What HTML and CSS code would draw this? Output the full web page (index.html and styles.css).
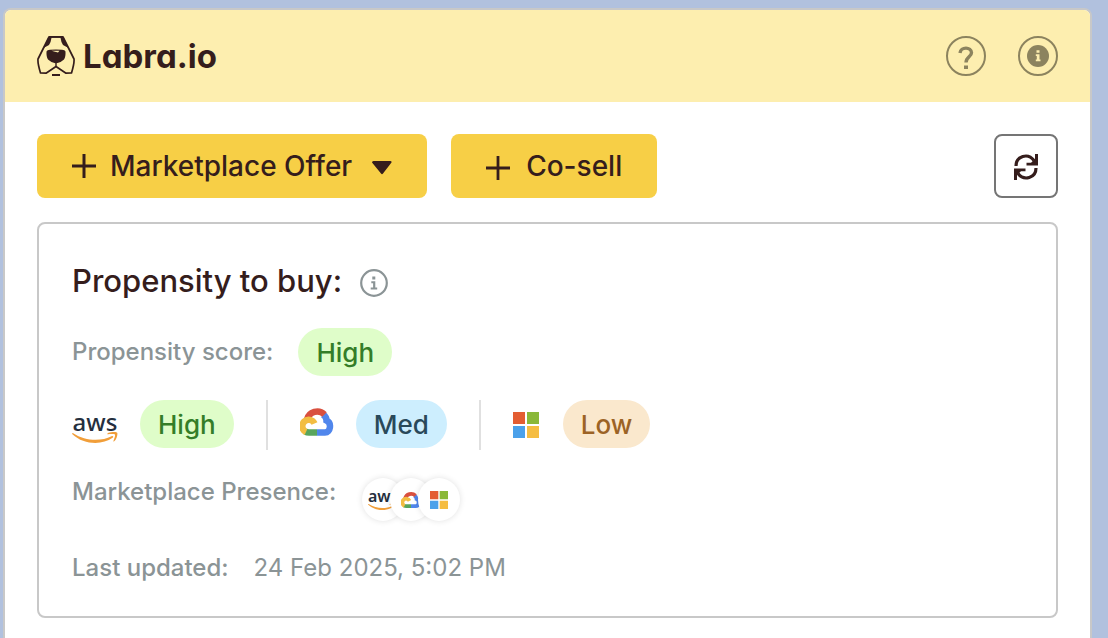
FILE: index.html
```
<!DOCTYPE html>
<html lang="en">
<head>
  <meta charset="UTF-8" />
  <meta name="viewport" content="width=device-width, initial-scale=1.0"/>
  <title>Labra.io</title>
  <link rel="stylesheet" href="styles.css">
</head>
<body>
  <!-- shared logo shapes -->
  <svg class="symbols" aria-hidden="true">
    <symbol id="google-cloud" viewBox="0 0 34 28">
      <path fill="none" stroke="#5086ec" stroke-width="6.500" d="M23 6.500Q26.500 9 26.500 12.500C32 15 30.500 24.500 25 24.500H17"/>
      <path fill="none" stroke="#d9503f" stroke-width="6.500" d="M7 11.500A10.500 10.500 0 0 1 24.500 6.500"/>
      <path fill="none" stroke="#58a55c" stroke-width="6.500" d="M17 24.500H9Q7 24.500 5 23.500"/>
      <path fill="none" stroke="#f2bd42" stroke-width="6.500" d="M6 24A6.400 6.400 0 1 1 14.500 15.500"/>
    </symbol>
    <symbol id="microsoft" viewBox="0 0 26 26">
      <path fill="#e35d32" d="M0 0h12v12H0z"/>
      <path fill="#8ab839" d="M14 0h12v12H14z"/>
      <path fill="#4ba1ea" d="M0 14h12v12H0z"/>
      <path fill="#f5bd42" d="M14 14h12v12H14z"/>
    </symbol>
    <symbol id="aws-smile" viewBox="0 0 46 12">
      <path fill="#f19e39" d="M1.200 1.200C13 9 29 9.600 39.500 4.200C41 3.600 42 4.800 40.600 5.800C30 13.500 11.500 12.800.400 2.200C-.200 1.400.400.700 1.200 1.200z"/>
      <path fill="#f19e39" d="M35.500 1.400C38 -.300 44 -.500 45.200.800C46 2.200 44.500 7.500 42.200 9.300C41.500 9.800 41.200 9.400 41.500 8.700C42.400 6.500 43.500 3.500 42.900 2.600C42.200 1.800 38.500 2 36.100 2.300C35.200 2.400 34.900 1.900 35.500 1.400z"/>
    </symbol>
  </svg>

  <div class="panel">
    <header>
      <a class="brand" href="#">
        <svg class="brand-mark" viewBox="0 0 38 40" aria-hidden="true">
          <path fill="none" stroke="#351d1c" stroke-width="1.700" stroke-linejoin="round" d="M12 1L8 9L1 23Q.500 27 3.500 37L9 37.200L19 30.500L29 37.200L34.500 37Q37.500 27 37 23L30 9L26 1z"/>
          <path fill="#351d1c" d="M12 0H26L31.500 12L26 9Q24 6 23.500 1.800H14.500Q14 6 12 9L6.500 12z"/>
          <path fill="#351d1c" d="M9.500 15.500Q10 14 13 13.800Q19 13 25 13.800Q28 14 28.500 15.500Q28.800 21 27 23.500Q24 26.500 19.700 27.200V31H18.300V27.200Q14 26.500 11 23.500Q9.200 21 9.500 15.500z"/>
          <path fill="#fdeeaf" d="M14.500 14.800H22.500L21 16.400L18 15.700z"/>
          <path fill="#351d1c" d="M15 38H23V40H15z"/>
        </svg>
        <span>Labra.io</span>
      </a>
      <div class="header-actions">
        <button class="round-button" aria-label="Help">
          <svg class="question" width="16" height="24" viewBox="0 0 16 24" aria-hidden="true">
            <path fill="none" stroke="#8c835e" stroke-width="3.400" d="M2 7C2.500 .500 13.500 .500 13.500 6.800C13.500 10.800 8 11 8 16.500"/>
            <path fill="#8c835e" d="M6 19.500h4v3.500H6z"/>
          </svg>
        </button>
        <button class="round-button" aria-label="Information">
          <svg width="22" height="22" viewBox="0 0 22 22" aria-hidden="true">
            <circle cx="11" cy="11" r="11" fill="#8c835e"/>
            <path fill="#fdeeaf" d="M9.500 5.300h3v2.400h-3zM8.800 9.300h3.700v5.200h1v1.700H8.800v-1.700h1V11h-1z"/>
          </svg>
        </button>
      </div>
    </header>

    <main>
      <div class="toolbar">
        <button class="primary-button offer-button">
          <svg width="24" height="24" viewBox="0 0 24 24" aria-hidden="true"><path stroke="#351d1c" stroke-width="3" d="M0 12H24M12 0V24"/></svg>
          <span>Marketplace Offer</span>
          <svg class="caret" width="20" height="14" viewBox="0 0 20 14" aria-hidden="true"><path fill="#351d1c" d="M0 1.500Q0 0 1.500 0H18.500Q20 0 19.500 1.500L11 12.500Q10 14 9 12.500z"/></svg>
        </button>
        <button class="primary-button cosell-button">
          <svg class="plus-thin" width="24" height="24" viewBox="0 0 24 24" aria-hidden="true"><path stroke="#351d1c" stroke-width="2.800" d="M0 12H24M12 0V24"/></svg>
          <span>Co-sell</span>
        </button>
        <button class="refresh-button" aria-label="Refresh">
          <svg class="refresh-icon" width="24" height="26" viewBox="0 0 24 26" aria-hidden="true">
            <path fill="none" stroke="#351d1c" stroke-width="3.200" d="M2 12C2 2 14 -1.500 20 6.500M22 14C22 24 10 27.500 4 19.500"/>
            <path fill="#351d1c" d="M24 0V11.500H12.500V8.800H17L21 5V0zM0 26V14.500H11.500V17.200H7L3 21V26z"/>
          </svg>
        </button>
      </div>

      <section class="card">
        <h1 class="card-title">
          Propensity to buy:
          <svg width="28" height="28" viewBox="0 0 28 28" aria-hidden="true">
            <circle cx="14" cy="14" r="12.800" fill="none" stroke="#8b9496" stroke-width="2.200"/>
            <path fill="#8b9496" d="M12.300 7.500h3v3h-3zM11.300 12.200h4v6.300h1.900v2.100h-6.500v-2.100h2.400v-4.200h-1.800z"/>
          </svg>
        </h1>

        <div class="score">
          <span class="label">Propensity score:</span>
          <span class="chip high">High</span>
        </div>

        <div class="clouds">
          <div class="cloud">
            <span class="aws" role="img" aria-label="AWS">aws<svg><use href="#aws-smile"/></svg></span>
            <span class="chip high">High</span>
          </div>
          <div class="cloud google">
            <svg class="google-logo" role="img" aria-label="Google Cloud"><use href="#google-cloud"/></svg>
            <span class="chip med">Med</span>
          </div>
          <div class="cloud microsoft">
            <svg class="microsoft-logo" role="img" aria-label="Microsoft"><use href="#microsoft"/></svg>
            <span class="chip low">Low</span>
          </div>
        </div>

        <div class="presence">
          <span class="label">Marketplace Presence:</span>
          <div class="badges">
            <span class="badge"><span class="aws small">aws<svg><use href="#aws-smile"/></svg></span></span>
            <span class="badge"><svg class="google-logo"><use href="#google-cloud"/></svg></span>
            <span class="badge"><svg class="microsoft-logo"><use href="#microsoft"/></svg></span>
          </div>
        </div>

        <div class="updated">
          <span class="label">Last updated:</span>
          <time datetime="2025-02-24T17:02">24 Feb 2025, 5:02 PM</time>
        </div>
      </section>
    </main>
  </div>
</body>
</html>
```

FILE: styles.css
```
* {
  box-sizing: border-box;
}

body {
  margin: 0;
  padding: 8px 16px 0 3px;
  min-height: 100vh;
  display: flex;
  background-color: #b1c1de;
  font-family: Inter, "Liberation Sans", sans-serif;
  color: #351d1c;
}

button {
  font: inherit;
  color: inherit;
  cursor: pointer;
}

svg {
  display: block;
  flex-shrink: 0;
}

.symbols {
  position: absolute;
  width: 0;
  height: 0;
}

.panel {
  flex: 1;
  border: 2px solid #c8c8c8;
  border-bottom: none;
  border-radius: 8px 8px 0 0;
  background-color: #fff;
  overflow: hidden;
}

header {
  display: flex;
  align-items: center;
  justify-content: space-between;
  padding: 26px 32px;
  background-color: #fdeeaf;
}

.brand {
  display: flex;
  align-items: center;
  gap: 8px;
  color: #351d1c;
  font-size: 33px;
  font-weight: 700;
  line-height: 40px;
  font-feature-settings: "cv11";
  text-decoration: none;
}

.brand-mark {
  width: 38px;
  height: 40px;
}

.header-actions {
  display: flex;
  gap: 32px;
}

.round-button {
  display: flex;
  align-items: center;
  justify-content: center;
  width: 40px;
  height: 40px;
  padding: 0;
  border: 2px solid #8c835e;
  border-radius: 50%;
  background: none;
}

.question {
  margin-top: 4px;
}

main {
  padding: 32px;
}

.toolbar {
  display: flex;
  gap: 24px;
  margin-bottom: 24px;
}

.primary-button {
  display: flex;
  align-items: center;
  height: 64px;
  padding: 0 35px;
  border: none;
  border-radius: 8px;
  background-color: #f7cf46;
  font-size: 28px;
  font-weight: 500;
}

.offer-button {
  gap: 14px;
}

.caret {
  margin-top: 4px;
  margin-left: 6px;
}

.cosell-button {
  gap: 16px;
}

.plus-thin {
  margin-top: 4px;
}

.refresh-button {
  display: flex;
  align-items: center;
  justify-content: center;
  width: 64px;
  height: 64px;
  margin-left: auto;
  padding: 0;
  border: 2px solid #757575;
  border-radius: 8px;
  background-color: #fff;
}

.refresh-icon {
  margin-top: 2px;
}

.card {
  padding: 32px 33px;
  border: 2px solid #c8c8c8;
  border-radius: 8px;
}

.card-title {
  display: flex;
  align-items: center;
  gap: 18px;
  margin: 0 0 22px;
  font-size: 31px;
  font-weight: 500;
  line-height: 50px;
}

.card-title svg {
  margin-top: 4px;
}

.score {
  display: flex;
  align-items: center;
  gap: 25px;
  margin-bottom: 24px;
}

.label {
  color: #8b9496;
  font-size: 24px;
  font-weight: 500;
  line-height: 32px;
}

.chip {
  padding: 1px 18px 0;
  border-radius: 24px;
  font-size: 26px;
  font-weight: 500;
  line-height: 47px;
}

.high {
  background-color: #dffdc9;
  color: #347d28;
}

.med {
  background-color: #cdeefe;
  color: #29495a;
}

.low {
  background-color: #fae8cd;
  color: #9c6325;
}

.clouds {
  display: flex;
  gap: 32px;
  margin-bottom: 26px;
}

.cloud {
  display: flex;
  align-items: flex-start;
  gap: 22px;
  height: 50px;
}

.cloud + .cloud {
  padding-left: 32px;
  border-left: 2px solid #e0e0e0;
}

.aws {
  padding-top: 12px;
  color: #252f3e;
  font-family: "Noto Sans", sans-serif;
  font-size: 24px;
  font-weight: 500;
  line-height: 20px;
  text-align: center;
}

.aws svg {
  width: 46px;
  height: 12px;
}

.google-logo {
  width: 34px;
  height: 28px;
  margin-top: 8px;
}

.cloud .microsoft-logo {
  width: 26px;
  height: 26px;
  margin-top: 12px;
}

.microsoft {
  gap: 24px;
}

.presence {
  display: flex;
  align-items: flex-start;
  gap: 26px;
  margin-bottom: 31px;
}

.badges {
  display: flex;
  padding-top: 2px;
}

.badge {
  display: flex;
  align-items: center;
  justify-content: center;
  width: 42px;
  height: 43px;
  border-radius: 50%;
  background-color: #fff;
  box-shadow: 0 0 6px rgba(0, 0, 0, 0.12);
  overflow: hidden;
}

.badge + .badge {
  margin-left: -14px;
}

.badge .google-logo {
  width: 20px;
  height: 18px;
  margin-top: 0;
}

.badge .microsoft-logo {
  width: 18px;
  height: 18px;
}

.aws.small {
  padding-top: 0;
  font-size: 16px;
  font-weight: 600;
  line-height: 14px;
}

.small svg {
  width: 28px;
  height: 8px;
}

.updated {
  display: flex;
  gap: 25px;
}

.updated time {
  color: #8b9496;
  font-size: 24px;
  line-height: 32px;
}
```
